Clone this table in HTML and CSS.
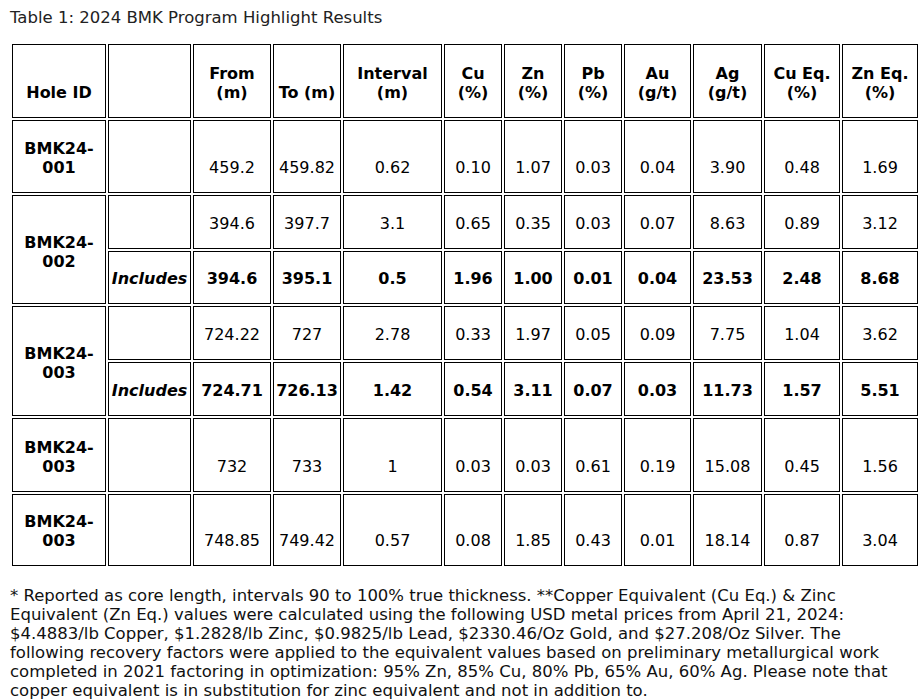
FILE: index.html
```html
<!DOCTYPE html>
<html>
<head>
<meta charset="utf-8">
<link rel="stylesheet" href="styles.css">
</head>
<body>
<div class="page">
  <div class="caption">Table 1: 2024 BMK Program Highlight Results</div>
  <table class="results">
    <colgroup>
      <col class="c1"><col class="c2"><col class="c3"><col class="c4"><col class="c5"><col class="c6">
      <col class="c7"><col class="c8"><col class="c9"><col class="c10"><col class="c11"><col class="c12">
    </colgroup>
    <thead>
      <tr class="h-head">
        <th>Hole ID</th><th></th><th>From<br>(m)</th><th>To (m)</th><th>Interval<br>(m)</th>
        <th>Cu<br>(%)</th><th>Zn<br>(%)</th><th>Pb<br>(%)</th><th>Au<br>(g/t)</th><th>Ag<br>(g/t)</th>
        <th>Cu Eq.<br>(%)</th><th>Zn Eq.<br>(%)</th>
      </tr>
    </thead>
    <tbody>
      <tr class="h-r1">
        <td class="hole">BMK24-<br>001</td><td></td>
        <td>459.2</td><td>459.82</td><td>0.62</td><td>0.10</td><td>1.07</td><td>0.03</td><td>0.04</td><td>3.90</td><td>0.48</td><td>1.69</td>
      </tr>
      <tr class="h-r2a">
        <td class="hole mid" rowspan="2">BMK24-<br>002</td><td></td>
        <td>394.6</td><td>397.7</td><td>3.1</td><td>0.65</td><td>0.35</td><td>0.03</td><td>0.07</td><td>8.63</td><td>0.89</td><td>3.12</td>
      </tr>
      <tr class="h-r2b strong">
        <td class="incl">Includes</td>
        <td>394.6</td><td>395.1</td><td>0.5</td><td>1.96</td><td>1.00</td><td>0.01</td><td>0.04</td><td>23.53</td><td>2.48</td><td>8.68</td>
      </tr>
      <tr class="h-r3a">
        <td class="hole mid" rowspan="2">BMK24-<br>003</td><td></td>
        <td>724.22</td><td>727</td><td>2.78</td><td>0.33</td><td>1.97</td><td>0.05</td><td>0.09</td><td>7.75</td><td>1.04</td><td>3.62</td>
      </tr>
      <tr class="h-r3b strong">
        <td class="incl">Includes</td>
        <td>724.71</td><td>726.13</td><td>1.42</td><td>0.54</td><td>3.11</td><td>0.07</td><td>0.03</td><td>11.73</td><td>1.57</td><td>5.51</td>
      </tr>
      <tr class="h-r4">
        <td class="hole">BMK24-<br>003</td><td></td>
        <td>732</td><td>733</td><td>1</td><td>0.03</td><td>0.03</td><td>0.61</td><td>0.19</td><td>15.08</td><td>0.45</td><td>1.56</td>
      </tr>
      <tr class="h-r5">
        <td class="hole">BMK24-<br>003</td><td></td>
        <td>748.85</td><td>749.42</td><td>0.57</td><td>0.08</td><td>1.85</td><td>0.43</td><td>0.01</td><td>18.14</td><td>0.87</td><td>3.04</td>
      </tr>
    </tbody>
  </table>
  <p class="note">* Reported as core length, intervals 90 to 100% true thickness. **Copper Equivalent (Cu Eq.) &amp; Zinc Equivalent (Zn Eq.) values were calculated using the following USD metal prices from April 21, 2024: $4.4883/lb Copper, $1.2828/lb Zinc, $0.9825/lb Lead, $2330.46/Oz Gold, and $27.208/Oz Silver. The following recovery factors were applied to the equivalent values based on preliminary metallurgical work completed in 2021 factoring in optimization: 95% Zn, 85% Cu, 80% Pb, 65% Au, 60% Ag. Please note that copper equivalent is in substitution for zinc equivalent and not in addition to.</p>
</div>
</body>
</html>
```

FILE: styles.css
```css
html, body {
  margin: 0;
  padding: 0;
  background: #ffffff;
}
body {
  font-family: "DejaVu Sans", Verdana, sans-serif;
  font-size: 16px;
  color: #000000;
}
.page {
  padding: 8px 10px 0 10px;
  width: 903px;
}
.caption {
  font-size: 16.5px;
  line-height: 19px;
  color: #222222;
}
.results {
  margin-top: 15px;
  border-collapse: separate;
  border-spacing: 2px;
  table-layout: fixed;
  width: 910px;
}
.c1 { width: 94px; }
.c2 { width: 83px; }
.c3 { width: 78px; }
.c4 { width: 68px; }
.c5 { width: 99px; }
.c6 { width: 58px; }
.c7 { width: 58px; }
.c8 { width: 58px; }
.c9 { width: 67px; }
.c10 { width: 69px; }
.c11 { width: 76px; }
.c12 { width: 76px; }
.results th,
.results td {
  border: 1px solid #000000;
  padding: 0 1px 15px 1px;
  text-align: center;
  vertical-align: bottom;
  white-space: nowrap;
}
.results th {
  font-weight: bold;
}
.results .hole {
  font-weight: bold;
}
.results .mid {
  vertical-align: middle;
  padding-bottom: 0;
  padding-top: 4px;
}
.strong td {
  font-weight: bold;
}
.results .incl {
  font-style: italic;
  font-weight: bold;
}
.h-head { height: 74px; }
.h-r1 { height: 73px; }
.h-r2a { height: 54px; }
.h-r2b { height: 53px; }
.h-r3a { height: 54px; }
.h-r3b { height: 54px; }
.h-r4 { height: 74px; }
.h-r5 { height: 72px; }
.note {
  margin: 18px 0 0 0;
  font-size: 16.5px;
  line-height: 19px;
  color: #111111;
}
```
